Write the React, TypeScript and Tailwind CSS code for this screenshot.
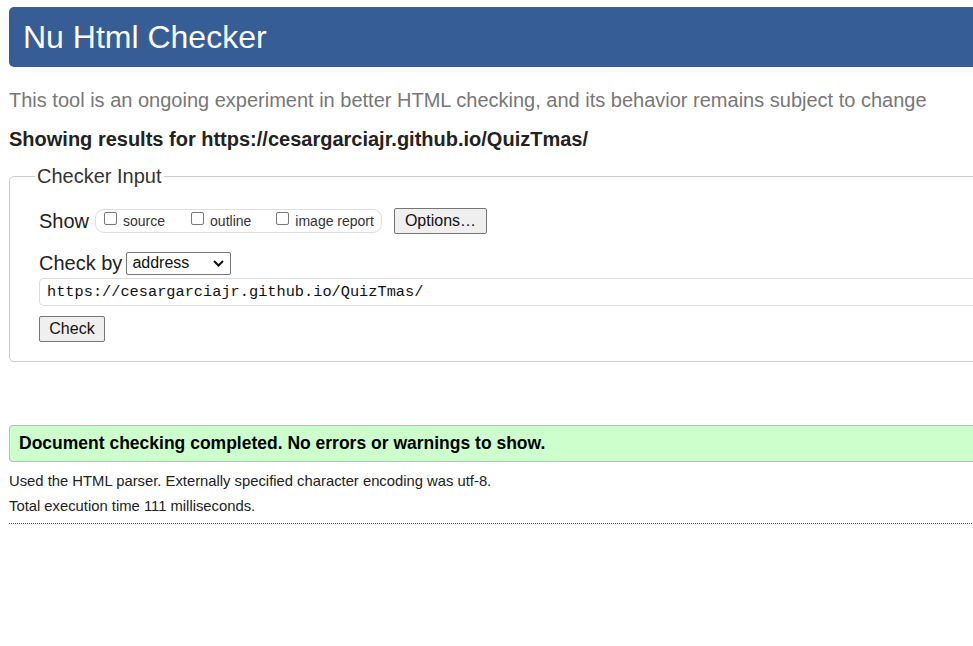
export default function App() {
  return (
    <div className="w-screen h-screen overflow-hidden bg-white font-['Liberation_Sans',Arial,sans-serif] text-[#222]">
      <div className="w-[1200px] pl-[9px]">
        {/* Header */}
        <div className="mt-[7px] h-[60px] rounded-l-[5px] bg-[#365d95] pl-[14px] flex items-center">
          <h1 className="text-white text-[32px] leading-none">Nu Html Checker</h1>
        </div>

        <p className="mt-[21px] text-[20px] leading-[24px] text-[#777]">
          This tool is an ongoing experiment in better HTML checking, and its behavior remains subject to change
        </p>
        <p className="mt-[15px] text-[20px] leading-[24px] font-bold text-[#222]">
          Showing results for https://cesargarciajr.github.io/QuizTmas/
        </p>

        {/* Checker input */}
        <fieldset className="mt-[13px] border border-[#ccc] rounded-[5px] pl-[29px] pt-[19px] pb-[19px]">
          <legend className="-ml-[4px] px-[2px] text-[20px] leading-[24px] text-[#333]">Checker Input</legend>

          <div className="flex items-center h-[28px]">
            <span className="text-[20px] text-[#222] mr-[6px]">Show</span>
            <div className="flex items-center h-[24px] border border-[#ddd] rounded-[9px] pl-[8px] pr-[7px] text-[14px] text-[#333]">
              <label className="flex items-center">
                <span className="w-[13px] h-[13px] border border-[#777] rounded-[2px] mt-[-6px] mr-[6px]" />
                source
              </label>
              <label className="flex items-center ml-[26px]">
                <span className="w-[13px] h-[13px] border border-[#777] rounded-[2px] mt-[-6px] mr-[6px]" />
                outline
              </label>
              <label className="flex items-center ml-[25px]">
                <span className="w-[13px] h-[13px] border border-[#777] rounded-[2px] mt-[-6px] mr-[6px]" />
                image report
              </label>
            </div>
            <button className="ml-[12px] h-[26px] px-[10px] border border-[#767676] rounded-[2px] bg-[#efefef] text-[16px] text-[#111]">
              Options…
            </button>
          </div>

          <div className="mt-[15px] flex items-center h-[26px]">
            <span className="text-[20px] text-[#222] mr-[4px]">Check by</span>
            <div className="w-[105px] h-[23px] border border-[#767676] rounded-[2px] flex items-center justify-between pl-[5px] pr-[6px] text-[16px] text-[#111]">
              <span>address</span>
              <svg width="11" height="7" viewBox="0 0 11 7">
                <path d="M1 1l4.5 4.5L10 1" fill="none" stroke="#111" strokeWidth="2" />
              </svg>
            </div>
          </div>

          <div className="mt-[2px] h-[28px] border border-[#ddd] border-r-0 rounded-l-[5px] flex items-center pl-[7px] font-['Liberation_Mono',monospace] text-[15.3px] text-[#111]">
            https://cesargarciajr.github.io/QuizTmas/
          </div>

          <button className="mt-[10px] h-[26px] w-[66px] border border-[#767676] rounded-[2px] bg-[#efefef] text-[16px] text-[#111]">
            Check
          </button>
        </fieldset>

        {/* Result */}
        <div className="mt-[63px] h-[37px] border border-[#bbb] border-r-0 rounded-l-[4px] bg-[#ccffcc] flex items-center pl-[9px]">
          <span className="text-[17.5px] font-bold text-black">Document checking completed. No errors or warnings to show.</span>
        </div>

        <p className="mt-[9px] text-[14.8px] leading-[20px] text-[#222]">
          Used the HTML parser. Externally specified character encoding was utf-8.
        </p>
        <p className="mt-[5px] text-[14.8px] leading-[20px] text-[#222]">Total execution time 111 milliseconds.</p>
        <div className="mt-[7px] border-t border-dotted border-[#555]" />
      </div>
    </div>
  );
}
